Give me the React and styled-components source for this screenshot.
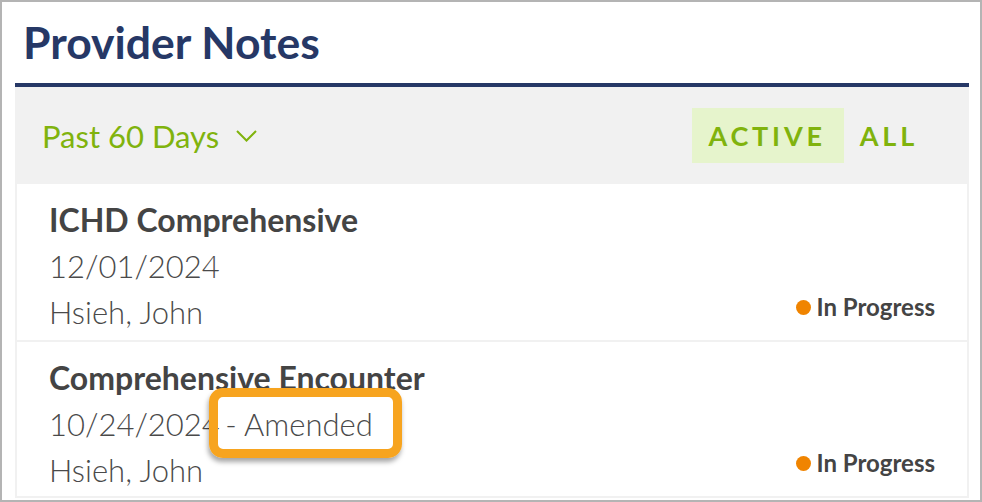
import React from 'react';
import styled, { createGlobalStyle } from 'styled-components';

const GlobalStyle = createGlobalStyle`
  html, body {
    margin: 0;
    padding: 0;
    background: #fff;
  }
  body {
    font-family: Lato, "Open Sans", sans-serif;
  }
`;

const Frame = styled.div`
  box-sizing: border-box;
  width: 982px;
  height: 502px;
  border: 2px solid #b4b4b4;
  padding: 0 11px 0 13px;
  overflow: hidden;
  background: #fff;
`;

const Title = styled.h1`
  box-sizing: border-box;
  height: 85px;
  margin: 0;
  padding: 13px 0 0 8px;
  font-size: 44.5px;
  line-height: 1.2;
  font-weight: 700;
  color: #263866;
  border-bottom: 4px solid #263866;
`;

const FilterBar = styled.div`
  height: 97px;
  background: #f1f1f1;
  display: flex;
  align-items: center;
  justify-content: space-between;
  padding: 0 33px 0 27px;
`;

const RangeSelect = styled.button`
  display: flex;
  align-items: center;
  gap: 17px;
  border: 0;
  background: none;
  padding: 0;
  font-family: inherit;
  font-size: 31px;
  color: #80b30d;
  cursor: pointer;
`;

const Tabs = styled.div`
  display: flex;
  align-items: center;
`;

const Tab = styled.button`
  height: 55px;
  padding: 0 18px 0 16px;
  border: 0;
  font-family: inherit;
  font-size: 27px;
  font-weight: 700;
  letter-spacing: 3.8px;
  color: #80b30d;
  background: ${p => (p.$active ? '#e6f4cc' : 'transparent')};
  cursor: pointer;
`;

const List = styled.div`
  border: 2px solid #f1f1f1;
  border-top: 0;
`;

const Row = styled.div`
  display: flex;
  justify-content: space-between;
  align-items: flex-end;
  height: 156px;
  box-sizing: border-box;
  padding: 12px 32px 0 32px;
  & + & {
    border-top: 2px solid #f1f1f1;
  }
`;

const Info = styled.div`
  display: flex;
  flex-direction: column;
  align-self: flex-start;
`;

const NoteTitle = styled.div`
  font-size: 32px;
  font-weight: 700;
  color: #444;
  line-height: 47px;
`;

const Line = styled.div`
  font-size: 31px;
  font-weight: 300;
  color: #4a4a4a;
  line-height: 46px;
`;

const Highlight = styled.span`
  position: relative;
  margin-left: -3px;
  &::after {
    content: '';
    position: absolute;
    left: -16px;
    right: -29px;
    top: -17px;
    bottom: -15px;
    border: 9px solid #f7a41f;
    border-radius: 14px;
    box-shadow: -1px 4px 5px rgba(0, 0, 0, 0.35);
  }
`;

const Status = styled.div`
  display: flex;
  align-items: center;
  gap: 6px;
  font-size: 24px;
  line-height: 30px;
  font-weight: 700;
  color: #444;
  margin-bottom: 18px;
`;

const Dot = styled.span`
  width: 15px;
  height: 15px;
  border-radius: 50%;
  background: ${p => p.$color};
`;

const notes = [
  { title: 'ICHD Comprehensive', date: '12/01/2024', provider: 'Hsieh, John', status: 'In Progress' },
  { title: 'Comprehensive Encounter', date: '10/24/2024', amended: true, provider: 'Hsieh, John', status: 'In Progress' }
];

const Chevron = () => (
  <svg width="21" height="12" viewBox="0 0 21 12" fill="none">
    <path d="M1 1l9.5 9.5L20 1" stroke="#80b30d" strokeWidth="2" />
  </svg>
);

export default function App() {
  return (
    <>
      <GlobalStyle />
      <Frame>
        <Title>Provider Notes</Title>
        <FilterBar>
          <RangeSelect>
            Past 60 Days
            <Chevron />
          </RangeSelect>
          <Tabs>
            <Tab $active>ACTIVE</Tab>
            <Tab>ALL</Tab>
          </Tabs>
        </FilterBar>
        <List>
          {notes.map((n, i) => (
            <Row key={i}>
              <Info>
                <NoteTitle>{n.title}</NoteTitle>
                <Line>
                  {n.date} {n.amended && <Highlight>- Amended</Highlight>}
                </Line>
                <Line>{n.provider}</Line>
              </Info>
              <Status>
                <Dot $color="#f08400" />
                {n.status}
              </Status>
            </Row>
          ))}
        </List>
      </Frame>
    </>
  );
}
